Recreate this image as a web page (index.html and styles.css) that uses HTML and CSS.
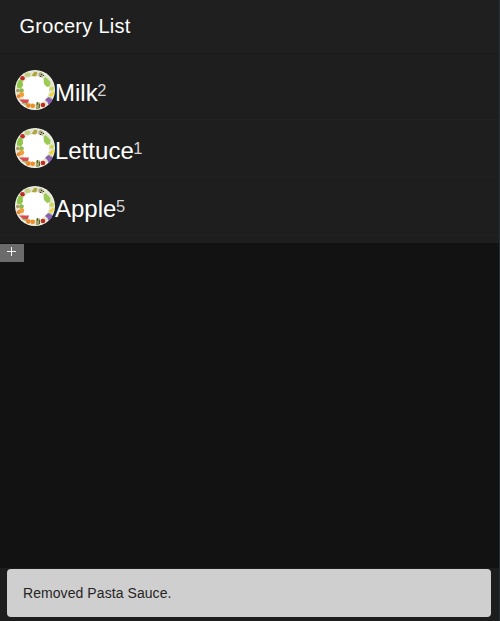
FILE: index.html
```
<!DOCTYPE html>
<html lang="en">
<head>
<meta charset="utf-8">
<title>Grocery List</title>
<link rel="stylesheet" href="styles.css">
</head>
<body>
<svg class="defs" aria-hidden="true">
  <symbol id="plate" viewBox="0 0 40 40">
    <circle cx="20" cy="20" r="20" fill="#f4f5ec"/>
    <circle cx="20" cy="20" r="16.500" fill="none" stroke="#e3e6d0" stroke-width="5"/>
    <circle cx="20" cy="20" r="14" fill="#fff"/>
    <circle cx="7.500" cy="8.200" r="2.300" fill="#bd2b25"/>
    <ellipse cx="12.500" cy="4.800" rx="3" ry="2.200" fill="#c5cf82"/>
    <path d="M16.500 6l3-4.500 3 1-1.500 4z" fill="#b0a440"/>
    <path d="M23.500 3.500l2-1.500 3 2-1 3.500-4-1z" fill="#a9a786"/>
    <path d="M26 4h1v1h-1zM25 6h1v1h-1zM28 5h1v1h-1z" fill="#36371f"/>
    <path d="M28.500 9l2-2 5 5-.5 4-3 1-3-3z" fill="#9bcb55"/>
    <path d="M2 14l2-4.500 3.500 1 .5 5-2 3-4-1z" fill="#90c64a"/>
    <path d="M34 20l2-3.500 3 1-1 3.500z" fill="#cbd653"/>
    <path d="M33.500 25l5-3.500 1 2-3 3.500z" fill="#ecd43d"/>
    <circle cx="2.800" cy="20.500" r="1.700" fill="#b19864"/>
    <circle cx="6.500" cy="20.500" r="2.300" fill="#8fb84a"/>
    <circle cx="6.700" cy="24.500" r="2.500" fill="#efa23a"/>
    <circle cx="3.600" cy="26.300" r="2" fill="#e98838"/>
    <path d="M4 29.500h10l-1 3.500H8z" fill="#df4955"/>
    <path d="M6 33l4 .5 3-1-2 2.500z" fill="#70a73d"/>
    <circle cx="13.300" cy="35.500" r="2.300" fill="#e9852b"/>
    <circle cx="17.700" cy="35.800" r="2.300" fill="#ef8d25"/>
    <path d="M21 32.500h4l-1 6.500h-3z" fill="#a5a26a"/>
    <path d="M22 32h1v3h-1zM24 34h1v4h-1z" fill="#4e7031"/>
    <circle cx="28" cy="35" r="2.300" fill="#c52922"/>
    <path d="M30 30l2-2 2-1 1.500 1.500h2l-1 3.500-3 3-1-3z" fill="#8b5eb5"/>
    <path d="M34.500 27l1.500 1-2 1z" fill="#659742"/>
  </symbol>
</svg>
<div class="app">
  <header class="toolbar"><h1>Grocery List</h1></header>
  <main>
    <ul class="list">
      <li class="item"><svg class="avatar"><use href="#plate"/></svg><span class="name">Milk</span><span class="qty">2</span></li>
      <li class="item"><svg class="avatar"><use href="#plate"/></svg><span class="name">Lettuce</span><span class="qty">1</span></li>
      <li class="item"><svg class="avatar"><use href="#plate"/></svg><span class="name">Apple</span><span class="qty">5</span></li>
    </ul>
    <button class="add" aria-label="Add item"><svg viewBox="0 0 24 18"><path d="M7 7.500h9M11.500 3v9"/></svg></button>
  </main>
  <footer class="bottom"><div class="snackbar" role="status">Removed Pasta Sauce.</div></footer>
</div>
</body>
</html>
```
FILE: styles.css
```
* { box-sizing: border-box; }
body {
  margin: 0;
  background: #121212;
  color: #fff;
  font-family: "Liberation Sans", Arial, sans-serif;
}
.defs { display: none; }
.app {
  display: flex;
  flex-direction: column;
  height: 621px;
  border-right: 1px solid #23303b;
}
.toolbar {
  display: flex;
  align-items: center;
  height: 54px;
  padding: 0 19.5px;
  background: #1f1f1f;
  border-bottom: 1px solid #1a1a1a;
}
.toolbar h1 {
  margin: 0;
  font-size: 20px;
  font-weight: 400;
  letter-spacing: 0.28px;
}
main { flex: 1; }
.list {
  margin: 0;
  padding: 8px 0 7px;
  list-style: none;
  background: #1e1e1e;
}
.item {
  display: flex;
  align-items: center;
  height: 58px;
  padding-left: 15px;
  border-bottom: 1px solid #212121;
}
.avatar {
  flex: none;
  width: 40px;
  height: 40px;
  margin-bottom: 1px;
}
.name {
  padding-top: 4px;
  font-size: 24px;
  line-height: 28px;
}
.qty {
  margin-left: -0.5px;
  padding-bottom: 2px;
  font-size: 16.5px;
  line-height: 18px;
  color: #d4d4d4;
}
.add {
  display: block;
  width: 24px;
  height: 18px;
  margin: 1px 0 0;
  padding: 0;
  border: 0;
  background: #6b6b6b;
}
.add svg {
  display: block;
  width: 24px;
  height: 18px;
  fill: none;
  stroke: #f4f4f4;
  stroke-width: 1;
}
.bottom {
  height: 53px;
  padding: 1px 8px 4px 7px;
  background: #1d1d1d;
}
.snackbar {
  display: flex;
  align-items: center;
  height: 48px;
  padding: 0 16px;
  border-radius: 4px;
  background: #cfcfcf;
  color: #252525;
  font-size: 14px;
  letter-spacing: 0.07px;
}
```
